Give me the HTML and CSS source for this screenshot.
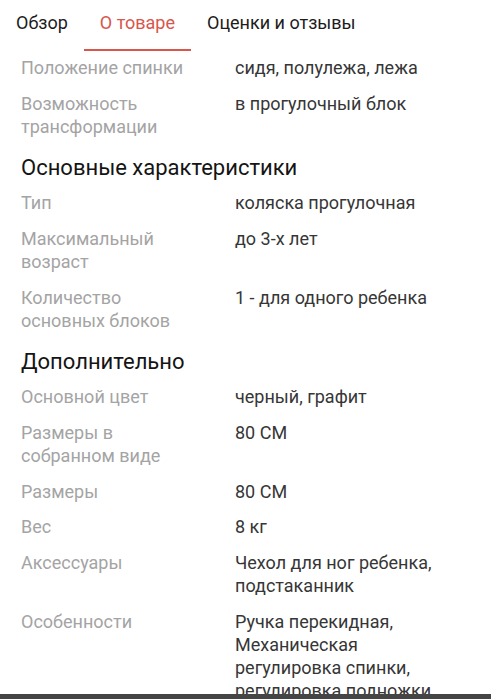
FILE: index.html
```html
<!DOCTYPE html>
<html lang="ru">
<head>
<meta charset="utf-8">
<title>О товаре</title>
<link rel="stylesheet" href="styles.css">
</head>
<body>
<nav class="tabs">
  <div class="tab">Обзор</div>
  <div class="tab active">О товаре</div>
  <div class="tab">Оценки и отзывы</div>
</nav>
<main class="specs">
  <div class="row"><div class="label">Положение спинки</div><div class="value">сидя, полулежа, лежа</div></div>
  <div class="row"><div class="label">Возможность трансформации</div><div class="value">в прогулочный блок</div></div>
  <h2 class="heading">Основные характеристики</h2>
  <div class="row"><div class="label">Тип</div><div class="value">коляска прогулочная</div></div>
  <div class="row"><div class="label">Максимальный возраст</div><div class="value">до 3-х лет</div></div>
  <div class="row"><div class="label">Количество основных блоков</div><div class="value">1 - для одного ребенка</div></div>
  <h2 class="heading">Дополнительно</h2>
  <div class="row"><div class="label">Основной цвет</div><div class="value">черный, графит</div></div>
  <div class="row"><div class="label">Размеры в собранном виде</div><div class="value">80 СМ</div></div>
  <div class="row"><div class="label">Размеры</div><div class="value">80 СМ</div></div>
  <div class="row"><div class="label">Вес</div><div class="value">8 кг</div></div>
  <div class="row"><div class="label">Аксессуары</div><div class="value">Чехол для ног ребенка, подстаканник</div></div>
  <div class="row"><div class="label">Особенности</div><div class="value">Ручка перекидная, Механическая регулировка спинки, регулировка подножки, регулировка капюшона</div></div>
</main>
<div class="navbar"></div>
</body>
</html>
```
FILE: styles.css
```css
html, body {
  margin: 0;
  padding: 0;
  background: #ffffff;
  font-family: Roboto, "Noto Sans", sans-serif;
  overflow: hidden;
  height: 699px;
}
.tabs {
  display: flex;
  height: 51px;
}
.tab {
  padding: 11px 16px 0;
  font-size: 18px;
  line-height: 23px;
  color: #1c1c1c;
  box-sizing: border-box;
  height: 51px;
}
.tab.active {
  color: #d8564c;
  border-bottom: 2.5px solid #d8564c;
}
.specs {
  padding: 0 40px 0 21px;
}
.row {
  display: grid;
  grid-template-columns: 180px 1fr;
  column-gap: 34px;
  padding: 4.85px 0 7.85px;
  font-size: 18px;
  line-height: 23px;
}
.label {
  color: #a4a4a4;
}
.value {
  color: #363636;
}
.heading {
  margin: 8.5px 0 4.5px;
  font-size: 22px;
  line-height: 28px;
  font-weight: 400;
  color: #141414;
}
.navbar {
  position: fixed;
  left: 0;
  right: 0;
  bottom: 0;
  height: 5px;
  background: #454545;
}
```
